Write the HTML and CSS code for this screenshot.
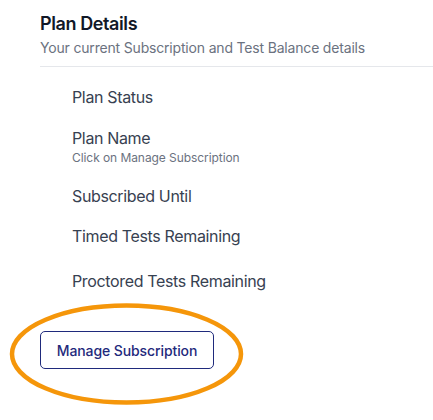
FILE: index.html
```html
<!DOCTYPE html>
<html lang="en">
<head>
<meta charset="utf-8">
<title>Plan Details</title>
<link rel="stylesheet" href="styles.css">
</head>
<body>
<section class="panel">
  <header class="panel-header">
    <h2 class="panel-title">Plan Details</h2>
    <p class="panel-subtitle">Your current Subscription and Test Balance details</p>
  </header>
  <dl class="details">
    <div class="row row-status"><dt>Plan Status</dt></div>
    <div class="row row-name"><dt>Plan Name</dt><dd class="hint">Click on Manage Subscription</dd></div>
    <div class="row row-until"><dt>Subscribed Until</dt></div>
    <div class="row row-timed"><dt>Timed Tests Remaining</dt></div>
    <div class="row row-proctored"><dt>Proctored Tests Remaining</dt></div>
  </dl>
  <div class="actions">
    <button class="btn-outline" type="button">Manage Subscription</button>
    <svg class="highlight" width="237" height="106" viewBox="0 0 237 106" aria-hidden="true">
      <ellipse cx="118.5" cy="53" rx="114.5" ry="48.5" fill="none" stroke="#f5960a" stroke-width="4.5"/>
    </svg>
  </div>
</section>
</body>
</html>
```
FILE: styles.css
```css
* { box-sizing: border-box; }
html, body { margin: 0; padding: 0; background: #ffffff; }
body {
  font-family: Inter, "Noto Sans", "Liberation Sans", sans-serif;
  color: #374151;
  -webkit-font-smoothing: antialiased;
  min-height: 420px;
}
.panel {
  padding: 10px 0 60px 40px;
}
.panel-header {
  padding-bottom: 8px;
  border-bottom: 1px solid #e5e7eb;
}
.panel-title {
  margin: 0;
  font-size: 18px;
  line-height: 28px;
  font-weight: 600;
  letter-spacing: -0.4px;
  color: #111827;
}
.panel-subtitle {
  margin: 0;
  font-size: 14px;
  line-height: 20px;
  letter-spacing: -0.18px;
  color: #6b7280;
}
.details {
  margin: 0;
  padding: 10px 0 0 32px;
  display: flex;
  flex-direction: column;
}
.row {
  padding: 8px 0;
}
.row dt {
  font-size: 16px;
  line-height: 24px;
  letter-spacing: -0.35px;
  color: #374151;
}
.row dd { margin: 0; }
.hint {
  font-size: 12px;
  line-height: 16px;
  letter-spacing: -0.07px;
  color: #6b7280;
}
.row-name { margin-top: 1px; }
.row-until { margin-top: 2px; }
.row-proctored { margin-top: 5px; }
.actions {
  position: relative;
  margin-top: 30px;
  width: 174px;
}
.btn-outline {
  display: block;
  width: 174px;
  height: 38px;
  padding: 0;
  white-space: nowrap;
  background: #ffffff;
  border: 1px solid #1f2a7c;
  border-radius: 5px;
  font-family: inherit;
  font-size: 14px;
  font-weight: 500;
  letter-spacing: -0.1px;
  color: #1f2a7c;
}
.highlight {
  position: absolute;
  left: -32px;
  top: -30px;
  pointer-events: none;
}
```
